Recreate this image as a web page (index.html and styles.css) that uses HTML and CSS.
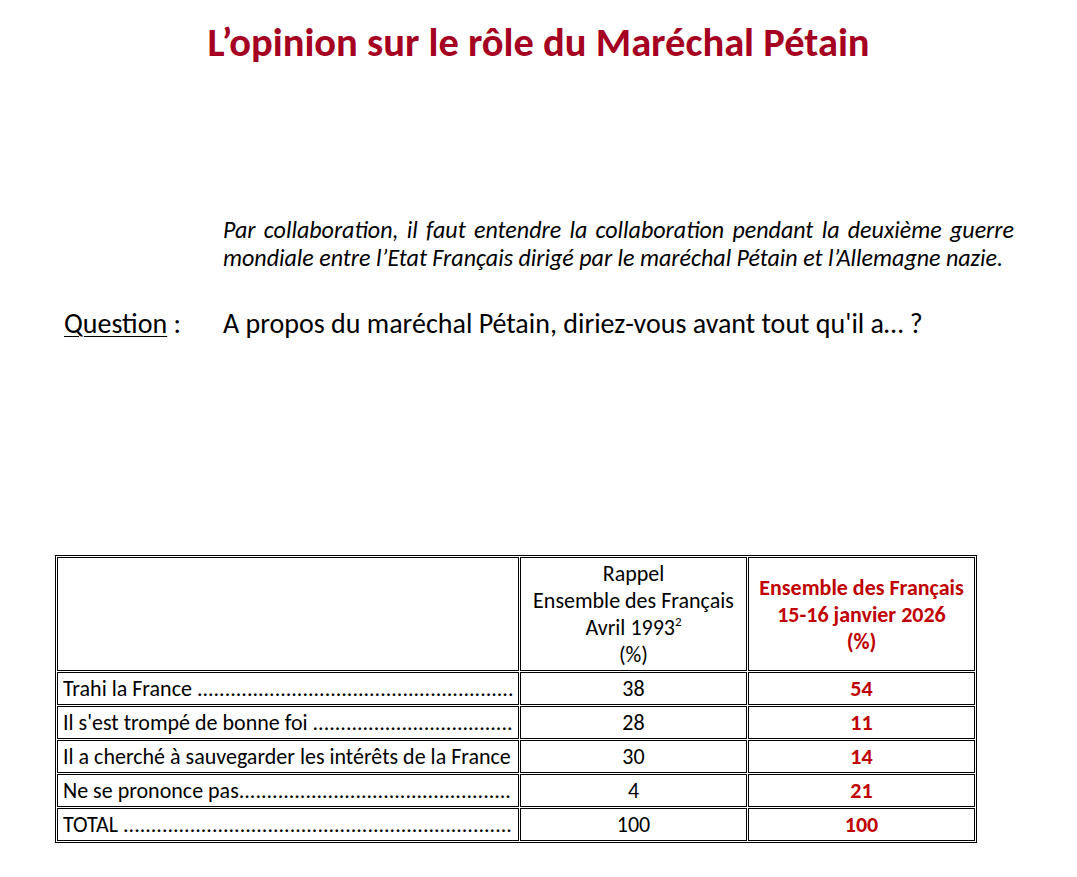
FILE: index.html
```html
<!DOCTYPE html>
<html lang="fr">
<head>
<meta charset="utf-8">
<title>L’opinion sur le rôle du Maréchal Pétain</title>
<link rel="stylesheet" href="styles.css">
</head>
<body>
<div class="page">
  <h1 class="title">L’opinion sur le rôle du Maréchal Pétain</h1>

  <p class="note">Par collaboration, il faut entendre la collaboration pendant la deuxième guerre mondiale entre l’Etat Français dirigé par le maréchal Pétain et l’Allemagne nazie.</p>

  <div class="question">
    <div class="q-label"><span class="q-word">Question</span> :</div>
    <div class="q-text">A propos du maréchal Pétain, diriez-vous avant tout qu'il a… ?</div>
  </div>

  <table class="results">
    <colgroup>
      <col class="c1">
      <col class="c2">
      <col class="c3">
    </colgroup>
    <tr class="head">
      <td></td>
      <td class="num">Rappel<br>Ensemble des Français<br>Avril 1993<sup>2</sup><br>(%)</td>
      <td class="num red">Ensemble des Français<br>15-16 janvier 2026<br>(%)</td>
    </tr>
    <tr>
      <td class="label">Trahi la France .........................................................</td>
      <td class="num">38</td>
      <td class="num red">54</td>
    </tr>
    <tr>
      <td class="label">Il s'est trompé de bonne foi ....................................</td>
      <td class="num">28</td>
      <td class="num red">11</td>
    </tr>
    <tr>
      <td class="label">Il a cherché à sauvegarder les intérêts de la France</td>
      <td class="num">30</td>
      <td class="num red">14</td>
    </tr>
    <tr>
      <td class="label">Ne se prononce pas.................................................</td>
      <td class="num">4</td>
      <td class="num red">21</td>
    </tr>
    <tr>
      <td class="label">TOTAL ......................................................................</td>
      <td class="num">100</td>
      <td class="num red">100</td>
    </tr>
  </table>
</div>
</body>
</html>
```
FILE: styles.css
```css
html, body {
  margin: 0;
  padding: 0;
  background: #ffffff;
}

body {
  font-family: "Carlito", "Open Sans", "Liberation Sans", sans-serif;
  color: #000000;
}

.page {
  padding: 20px 0 0 0;
}

.title {
  margin: 0;
  text-align: center;
  font-size: 40.5px;
  line-height: 44px;
  font-weight: bold;
  color: #a50021;
}

.note {
  margin: 152px 63px 0 223px;
  font-style: italic;
  font-size: 24px;
  line-height: 28px;
  text-align: justify;
}

.question {
  display: flex;
  margin: 35px 0 0 64px;
  font-size: 28px;
  line-height: 34px;
}

.q-label {
  width: 159px;
}

.q-word {
  text-decoration: underline;
  text-decoration-thickness: 1px;
  text-underline-offset: 3px;
}

.results {
  margin: 214px 0 0 55px;
  border: 1px solid #000;
  border-collapse: separate;
  border-spacing: 1px;
  table-layout: fixed;
  width: 922px;
  font-size: 22px;
}

.c1 { width: 462px; }
.c2 { width: 227px; }
.c3 { width: 227px; }

.results td {
  border: 1px solid #000;
  padding: 0 5px;
  height: 31px;
  line-height: 31px;
  vertical-align: middle;
}

.results tr.head td {
  height: 112px;
  line-height: 27px;
}

.results .num {
  text-align: center;
}

.results .red {
  color: #c00000;
  font-weight: bold;
}

.results sup {
  font-size: 13px;
  line-height: 0;
  vertical-align: 9px;
}

.results .label {
  white-space: nowrap;
}
```
